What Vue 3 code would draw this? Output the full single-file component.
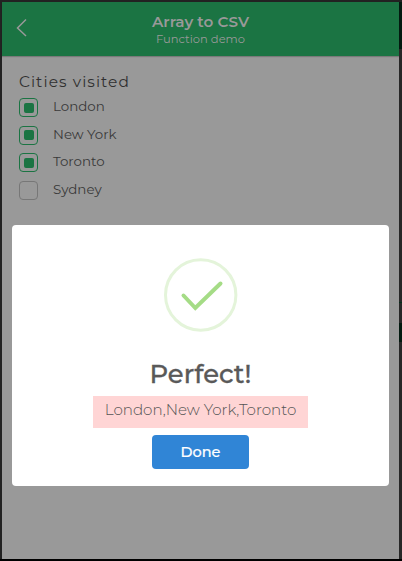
<script setup>
import { ref } from 'vue'

const cities = ref([
  { name: 'London', checked: true },
  { name: 'New York', checked: true },
  { name: 'Toronto', checked: true },
  { name: 'Sydney', checked: false }
])
</script>

<template>
  <div class="stage">
    <div class="screen">
      <header class="header">
        <svg class="back" viewBox="0 0 12 20" width="12" height="20">
          <path d="M10 1.5 L1.5 10 L10 18" />
        </svg>
        <div class="titles">
          <div class="title">Array to CSV</div>
          <div class="subtitle">Function demo</div>
        </div>
      </header>
      <main class="content">
        <h2 class="label">Cities visited</h2>
        <div class="list">
          <div v-for="city in cities" :key="city.name" class="row">
            <span class="box" :class="{ on: city.checked }"><i v-if="city.checked" class="dot"></i></span>
            <span class="name">{{ city.name }}</span>
          </div>
        </div>
      </main>
    </div>
    <aside class="edge">
      <i class="edge-header"></i>
      <i class="edge-line"></i>
      <i class="edge-button"></i>
    </aside>
    <section class="modal">
      <svg class="icon" viewBox="0 0 74 74" width="74" height="74">
        <circle cx="36.7" cy="37" r="35.2" />
        <path d="M19.5 37.5 L31.3 50 L56.5 25.5" />
      </svg>
      <h1 class="heading">Perfect!</h1>
      <div class="result">London,New York,Toronto</div>
      <button class="done">Done</button>
    </section>
  </div>
</template>

<style>
body {
  margin: 0;
  background: #000;
}
</style>

<style scoped>
.stage {
  position: relative;
  box-sizing: border-box;
  width: 402px;
  height: 561px;
  padding: 2px 0 2px 2px;
  display: flex;
  overflow: hidden;
  background: linear-gradient(#222 0 559px, #000 559px);
  font-family: Montserrat, Inter, sans-serif;
}
.screen {
  width: 397px;
  height: 557px;
  background: #999;
}
.header {
  box-sizing: border-box;
  height: 54px;
  display: flex;
  background: #1b7443;
  box-shadow: 0 1px 1px rgba(0, 0, 0, 0.2);
  color: #999;
}
.back {
  flex: none;
  margin: 16px 0 0 14px;
}
.back path {
  fill: none;
  stroke: #999;
  stroke-width: 1.5;
}
.titles {
  flex: 1;
  margin-right: 26px;
  padding-top: 11px;
  text-align: center;
}
.title {
  font-size: 15.2px;
  line-height: 18px;
  font-weight: 600;
}
.subtitle {
  font-size: 11.5px;
  line-height: 16px;
}
.content {
  padding: 16px 17px 0;
}
.label {
  margin: 0;
  font-size: 15.4px;
  line-height: 20px;
  font-weight: 400;
  letter-spacing: 1.08px;
  color: #303030;
}
.list {
  display: flex;
  flex-direction: column;
  gap: 8.7px;
  padding-top: 6px;
}
.row {
  display: flex;
  height: 19px;
}
.box {
  box-sizing: border-box;
  width: 19px;
  height: 19px;
  border: 1px solid #777;
  border-radius: 4px;
  display: flex;
  align-items: center;
  justify-content: center;
}
.box.on {
  border-color: #1b7443;
}
.dot {
  width: 10px;
  height: 10px;
  border-radius: 2px;
  background: #1b7443;
}
.name {
  margin-left: 15px;
  font-size: 13.4px;
  line-height: 16px;
  color: #3a3a3a;
}
.edge {
  flex: 1;
  height: 557px;
  background: #272727;
}
.edge i {
  display: block;
}
.edge-header {
  height: 47px;
  background: #031a10;
}
.edge-line {
  height: 1px;
  margin-top: 253px;
  background: #03301a;
}
.edge-button {
  height: 19px;
  margin-top: 20px;
  background: #031a10;
}
.modal {
  position: absolute;
  left: 12px;
  top: 225px;
  width: 377px;
  height: 261px;
  border-radius: 4px;
  background: #fff;
  display: flex;
  flex-direction: column;
  align-items: center;
}
.icon {
  flex: none;
  margin-top: 33px;
}
.icon circle {
  fill: none;
  stroke: #e4f4da;
  stroke-width: 3;
}
.icon path {
  fill: none;
  stroke: #a5dc86;
  stroke-width: 4;
  stroke-linecap: round;
}
.heading {
  margin: 24px 0 0;
  font-size: 25.8px;
  line-height: 36px;
  font-weight: 500;
  color: #595959;
  -webkit-text-stroke: 0.3px #595959;
}
.result {
  box-sizing: border-box;
  width: 215px;
  height: 32px;
  margin-top: 4px;
  background: #ffd5d5;
  text-align: center;
  white-space: nowrap;
  font-size: 15.1px;
  line-height: 27px;
  font-weight: 300;
  color: #545454;
}
.done {
  width: 97px;
  height: 34px;
  margin-top: 7px;
  padding: 0;
  border: 0;
  border-radius: 4px;
  background: #3085d6;
  color: #fff;
  font-family: inherit;
  font-size: 14.5px;
  line-height: 34px;
  font-weight: 500;
  -webkit-text-stroke: 0.2px #fff;
}
</style>
